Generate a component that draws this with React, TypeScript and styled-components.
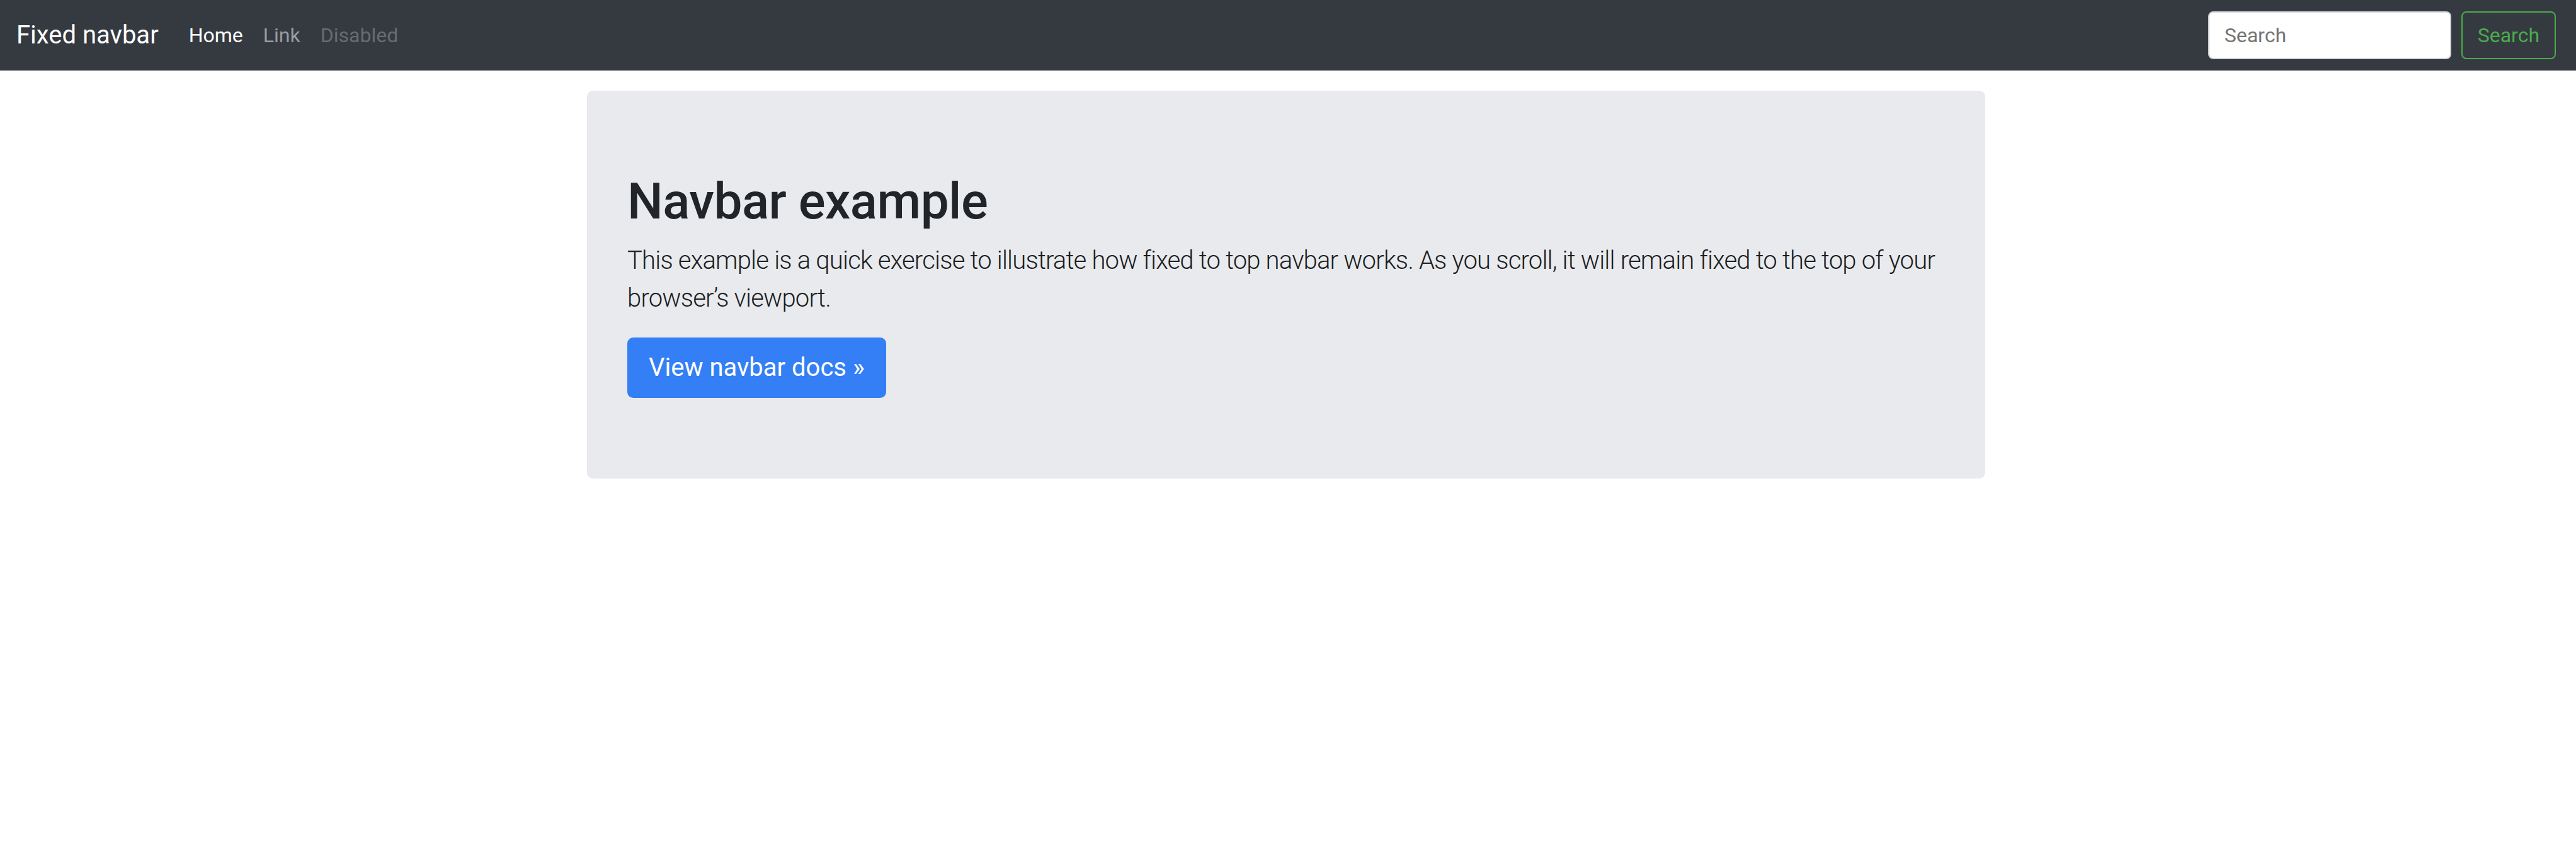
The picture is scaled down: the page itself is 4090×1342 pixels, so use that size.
import styled, { createGlobalStyle } from 'styled-components'

const GlobalStyle = createGlobalStyle`
  html, body {
    margin: 0;
    padding: 0;
    background: #fff;
  }
  body {
    font-family: Roboto, "Liberation Sans", Arial, sans-serif;
    font-size: 32px;
    line-height: 1.5;
    color: #212529;
  }
  *, *::before, *::after {
    box-sizing: border-box;
  }
`

const Navbar = styled.nav`
  display: flex;
  align-items: center;
  height: 112px;
  padding: 16px 32px 16px 26px;
  background: #343a40;
`

const Brand = styled.a`
  display: inline-block;
  padding: 10px 0;
  margin-right: 32px;
  font-size: 40px;
  line-height: 60px;
  color: #fff;
  text-decoration: none;
  white-space: nowrap;
`

const NavList = styled.ul`
  display: flex;
  list-style: none;
  margin: 0 auto 0 0;
  padding: 0;
`

const NavLink = styled.a<{ $state?: 'active' | 'disabled' }>`
  display: block;
  padding: 0 16px;
  font-size: 32px;
  line-height: 48px;
  text-decoration: none;
  color: ${(p) =>
    p.$state === 'active' ? '#fff' : p.$state === 'disabled' ? '#676b70' : '#9a9da0'};
`

const SearchForm = styled.form`
  display: flex;
  align-items: center;
`

const SearchInput = styled.input`
  width: 386px;
  height: 76px;
  margin-right: 16px;
  padding: 12px 24px;
  font-family: inherit;
  font-size: 32px;
  line-height: 48px;
  color: #495057;
  background: #fff;
  border: 2px solid #ced4da;
  border-radius: 8px;
  outline: none;
  ::placeholder {
    color: #6c757d;
  }
`

const OutlineButton = styled.button`
  height: 76px;
  padding: 12px 24px;
  font-family: inherit;
  font-size: 32px;
  line-height: 48px;
  color: #4cab4f;
  background: transparent;
  border: 2px solid #4cab4f;
  border-radius: 8px;
  cursor: pointer;
`

const Main = styled.main`
  width: 2280px;
  margin: 0 auto;
  padding: 32px 30px 0;
  position: relative;
  left: -3px;
`

const Jumbotron = styled.div`
  padding: 128px 64px;
  margin-bottom: 64px;
  background: #e9eaee;
  border-radius: 9.6px;
`

const Title = styled.h1`
  margin: 0 0 16px;
  font-size: 80px;
  font-weight: 500;
  line-height: 1.2;
  letter-spacing: -0.5px;
  color: #212529;
`

const Lead = styled.p`
  margin: 0 0 32px;
  font-size: 40px;
  font-weight: 300;
  line-height: 60px;
  letter-spacing: -0.8px;
  color: #1b1e21;
`

const PrimaryButton = styled.a`
  display: inline-block;
  padding: 16px 32px;
  font-size: 40px;
  line-height: 60px;
  color: #fff;
  background: #347ff5;
  border: 2px solid #347ff5;
  border-radius: 9.6px;
  text-decoration: none;
`

export default function App() {
  return (
    <>
      <GlobalStyle />
      <Navbar>
        <Brand href="#">Fixed navbar</Brand>
        <NavList>
          <li>
            <NavLink href="#" $state="active">Home</NavLink>
          </li>
          <li>
            <NavLink href="#">Link</NavLink>
          </li>
          <li>
            <NavLink $state="disabled">Disabled</NavLink>
          </li>
        </NavList>
        <SearchForm onSubmit={(e) => e.preventDefault()}>
          <SearchInput type="text" placeholder="Search" aria-label="Search" />
          <OutlineButton type="submit">Search</OutlineButton>
        </SearchForm>
      </Navbar>
      <Main>
        <Jumbotron>
          <Title>Navbar example</Title>
          <Lead>
            This example is a quick exercise to illustrate how fixed to top navbar works. As you
            scroll, it will remain fixed to the top of your browser’s viewport.
          </Lead>
          <PrimaryButton href="#">View navbar docs »</PrimaryButton>
        </Jumbotron>
      </Main>
    </>
  )
}
